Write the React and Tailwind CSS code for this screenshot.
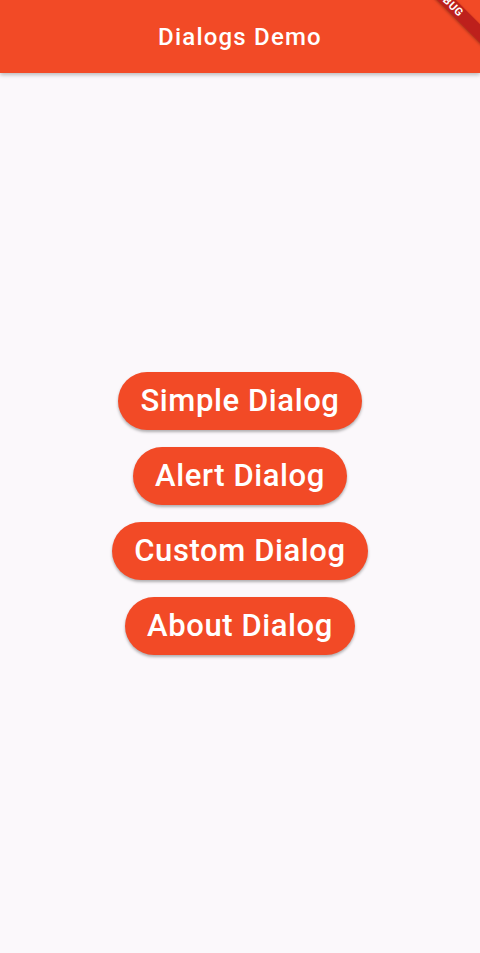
import React from "react";

export default function App() {
  const items = ["Simple Dialog", "Alert Dialog", "Custom Dialog", "About Dialog"];
  return (
    <div className="relative w-[480px] h-[953px] overflow-hidden bg-[#fbf8fb] flex flex-col" style={{ fontFamily: "Roboto, 'Noto Sans', sans-serif" }}>
      <header className="h-[73px] shrink-0 bg-[#f24a26] flex items-center justify-center shadow-[0_2px_4px_rgba(0,0,0,0.25)] z-10">
        <h1 className="text-white text-[24px] font-medium tracking-[1.2px] leading-none">Dialogs Demo</h1>
      </header>
      <main className="flex-1 flex flex-col items-center justify-center gap-[17px]">
        {items.map((t) => (
          <button
            key={t}
            className="h-[58px] px-[22px] rounded-full bg-[#f24a26] text-white text-[31px] font-medium tracking-[0.6px] leading-none shadow-[0_2px_3px_rgba(0,0,0,0.3)]"
          >
            {t}
          </button>
        ))}
      </main>
      <div className="absolute top-0 right-0 w-[80px] h-[80px] overflow-hidden pointer-events-none z-20">
        <div className="absolute top-[-5px] right-[-38px] w-[140px] h-[13px] bg-[#b71c1c]/90 rotate-45 flex items-center justify-center shadow-[0_1px_3px_rgba(0,0,0,0.35)]">
          <span className="text-white text-[11px] font-bold tracking-[0.5px] leading-none">DEBUG</span>
        </div>
      </div>
    </div>
  );
}
